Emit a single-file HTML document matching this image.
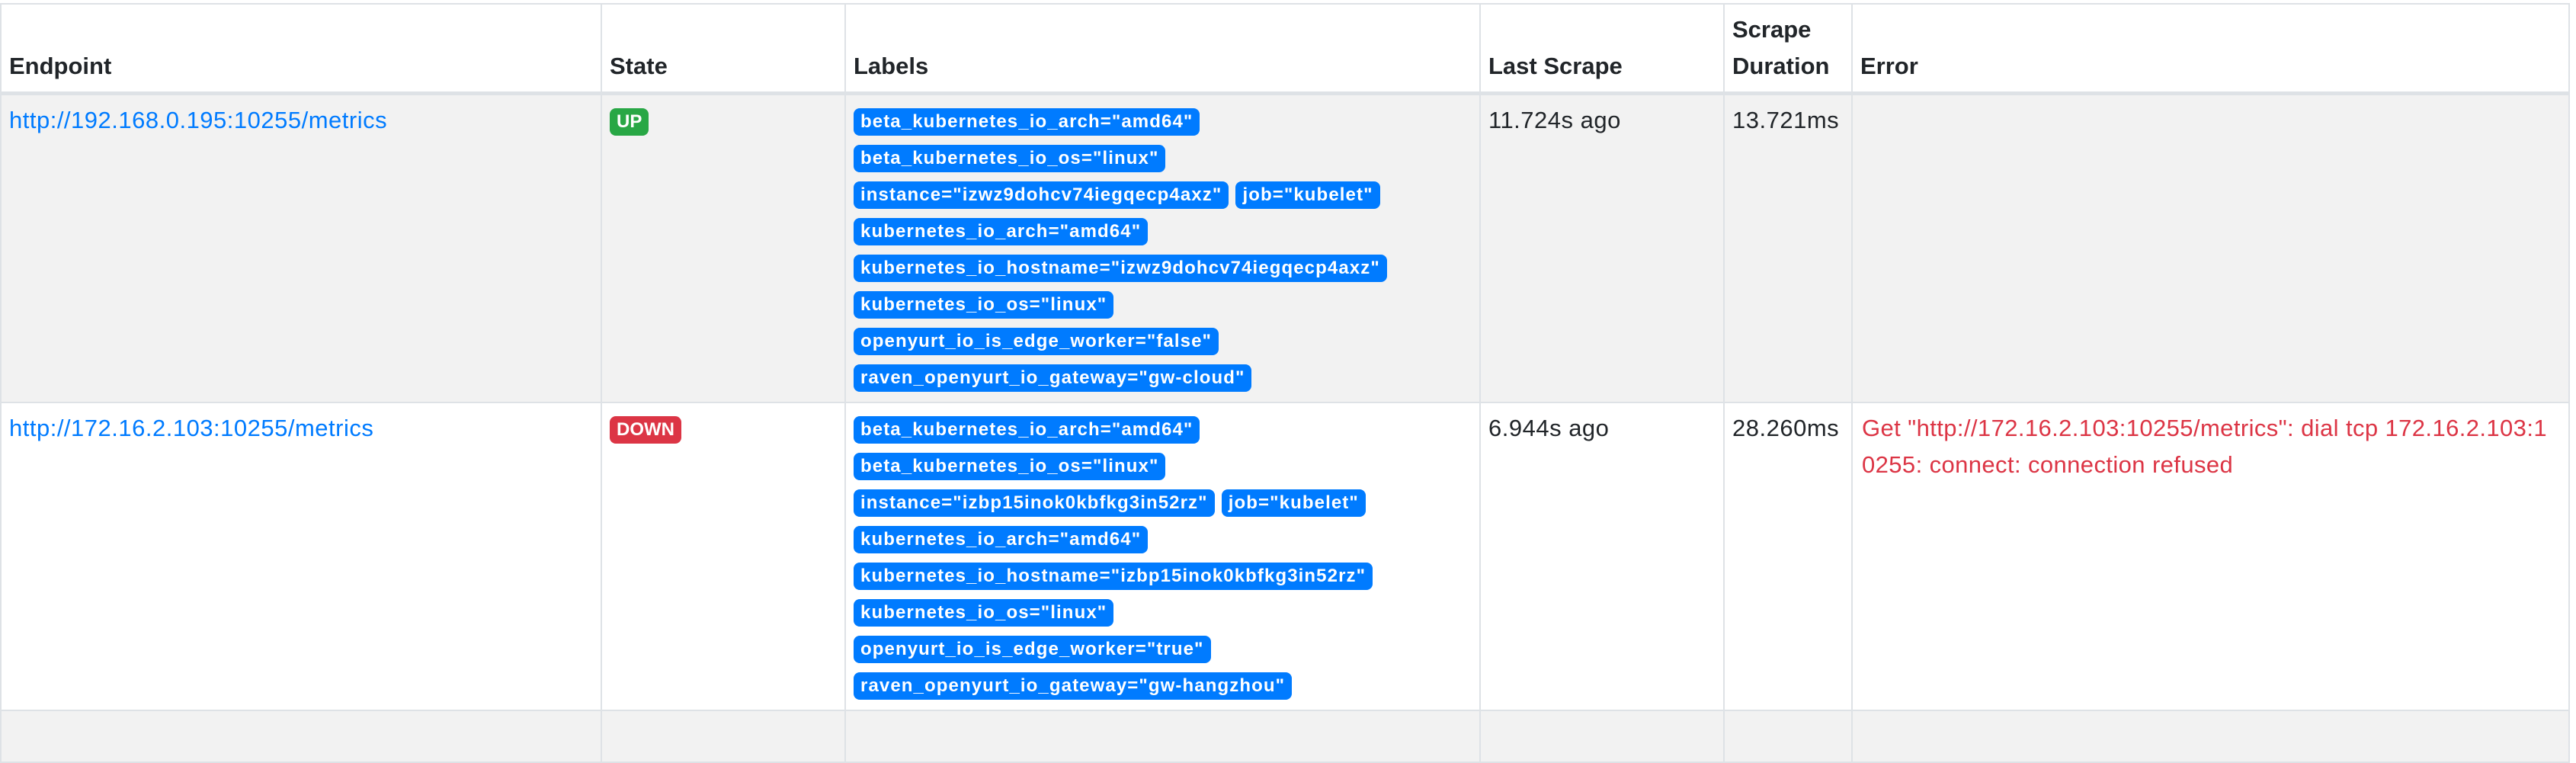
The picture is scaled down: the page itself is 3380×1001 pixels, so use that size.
<!DOCTYPE html>
<html><head><meta charset="utf-8"><style>
html,body{margin:0;padding:0;background:#fff;}
body{width:3380px;height:938px;overflow:hidden;font-family:"Liberation Sans",Arial,sans-serif;font-size:31px;color:#212529;line-height:48px;}
table{border-collapse:collapse;table-layout:fixed;width:3372px;margin-top:4px;}
th,td{border:2px solid #dee2e6;padding:9px 10px;vertical-align:top;text-align:left;}
td{letter-spacing:0.5px;}
th{vertical-align:bottom;font-weight:bold;border-bottom:5px solid #dee2e6;}
tr.s td{background:#f2f2f2;}
a{color:#007bff;text-decoration:none;}
.b{display:inline-block;font-size:24px;font-weight:bold;line-height:1;padding:6px 9px;border-radius:8px;color:#fff;background:#007bff;vertical-align:middle;white-space:nowrap;letter-spacing:1.1px;}
.up{background:#28a745;letter-spacing:0;}
.dn{background:#dc3545;letter-spacing:0;}
.err{color:#dc3545;word-break:break-all;padding-left:12px;letter-spacing:0.4px;}
</style></head><body>
<table>
<colgroup><col style="width:788px"><col style="width:320px"><col style="width:833px"><col style="width:320px"><col style="width:168px"><col></colgroup>
<thead><tr><th>Endpoint</th><th>State</th><th>Labels</th><th>Last Scrape</th><th>Scrape Duration</th><th>Error</th></tr></thead>
<tbody>
<tr class="s"><td><a>http://192.168.0.195:10255/metrics</a></td><td><span class="b up">UP</span></td>
<td><span class="b">beta_kubernetes_io_arch="amd64"</span><br><span class="b">beta_kubernetes_io_os="linux"</span><br><span class="b">instance="izwz9dohcv74iegqecp4axz"</span> <span class="b">job="kubelet"</span><br><span class="b">kubernetes_io_arch="amd64"</span><br><span class="b">kubernetes_io_hostname="izwz9dohcv74iegqecp4axz"</span><br><span class="b">kubernetes_io_os="linux"</span><br><span class="b">openyurt_io_is_edge_worker="false"</span><br><span class="b">raven_openyurt_io_gateway="gw-cloud"</span></td>
<td>11.724s ago</td><td>13.721ms</td><td></td></tr>
<tr><td><a>http://172.16.2.103:10255/metrics</a></td><td><span class="b dn">DOWN</span></td>
<td><span class="b">beta_kubernetes_io_arch="amd64"</span><br><span class="b">beta_kubernetes_io_os="linux"</span><br><span class="b">instance="izbp15inok0kbfkg3in52rz"</span> <span class="b">job="kubelet"</span><br><span class="b">kubernetes_io_arch="amd64"</span><br><span class="b">kubernetes_io_hostname="izbp15inok0kbfkg3in52rz"</span><br><span class="b">kubernetes_io_os="linux"</span><br><span class="b">openyurt_io_is_edge_worker="true"</span><br><span class="b">raven_openyurt_io_gateway="gw-hangzhou"</span></td>
<td>6.944s ago</td><td>28.260ms</td><td class="err">Get "http://172.16.2.103:10255/metrics": dial tcp 172.16.2.103:1<br>0255: connect: connection refused</td></tr>
<tr class="s"><td>&nbsp;</td><td></td><td></td><td></td><td></td><td></td></tr>
</tbody></table>
</body></html>
